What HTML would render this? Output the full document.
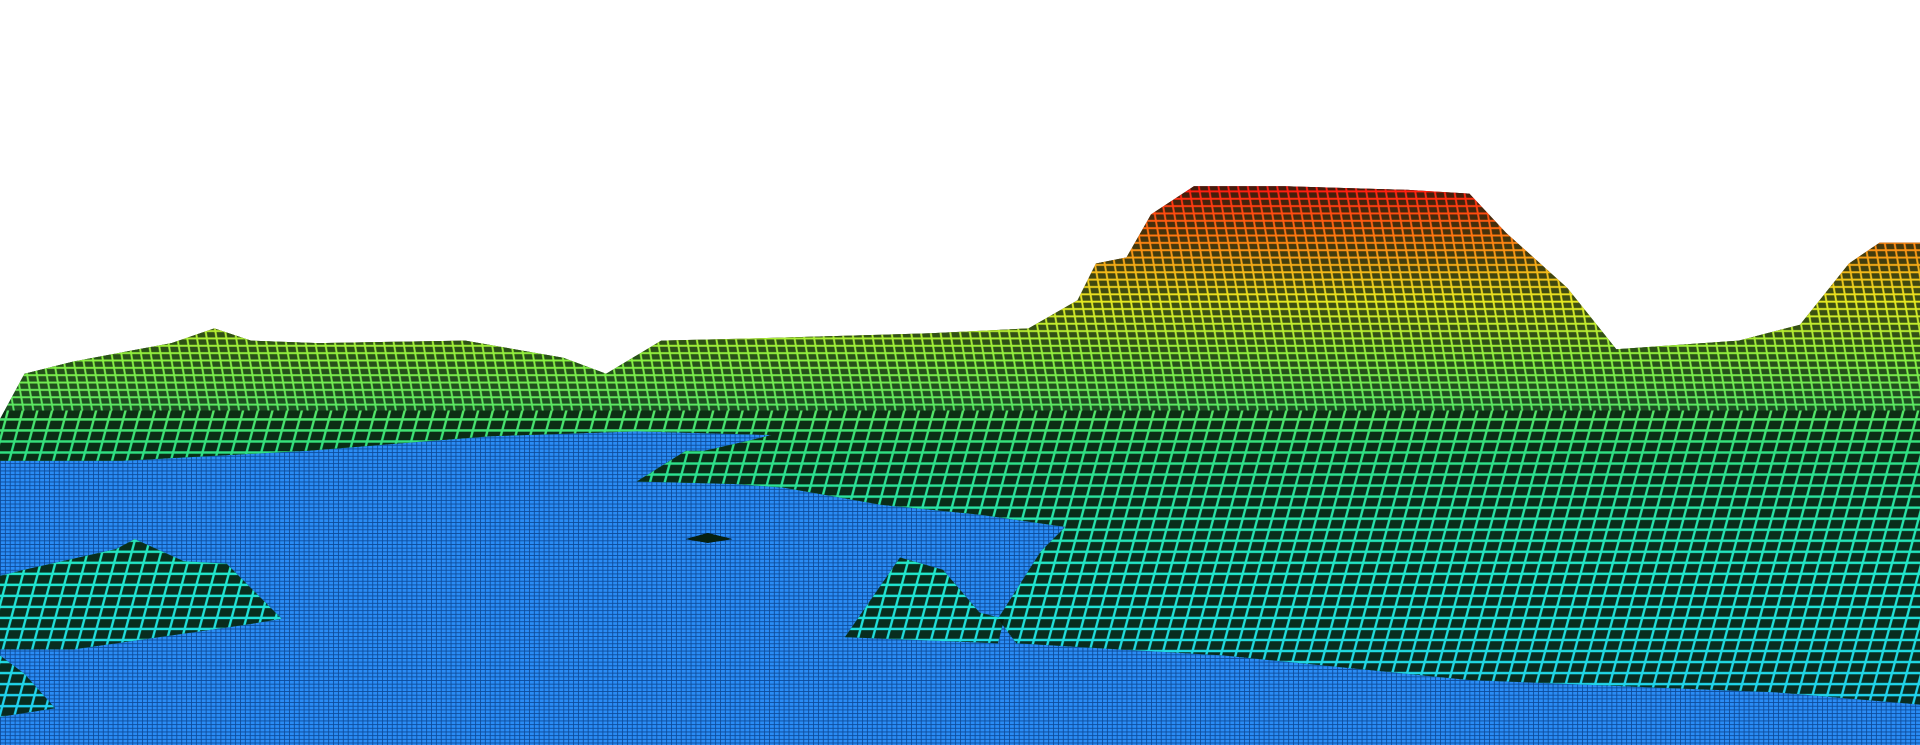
<!DOCTYPE html>
<html><head><meta charset="utf-8"><style>html,body{margin:0;padding:0;background:#fff;overflow:hidden}svg{display:block}</style></head>
<body>
<svg width="1920" height="745" viewBox="0 0 1568 608" preserveAspectRatio="none" xmlns="http://www.w3.org/2000/svg">
<defs>
<linearGradient id="g" x1="0" y1="150" x2="0" y2="580" gradientUnits="userSpaceOnUse">
<stop offset="0" stop-color="#ff1010"/>
<stop offset="0.1" stop-color="#ff7a10"/>
<stop offset="0.22" stop-color="#e8e820"/>
<stop offset="0.33" stop-color="#8cf040"/>
<stop offset="0.5" stop-color="#30e080"/>
<stop offset="0.75" stop-color="#20e8d0"/>
<stop offset="1" stop-color="#20d0f0"/>
</linearGradient>
<pattern id="cells" width="12" height="9" patternUnits="userSpaceOnUse" patternTransform="skewX(-15)">
<rect x="1.3" y="1.3" width="10" height="7" fill="#051a0a" opacity="0.9"/>
</pattern>
<pattern id="cellsFar" width="8" height="6" patternUnits="userSpaceOnUse" patternTransform="skewX(10)">
<rect x="1" y="1" width="6.4" height="4.4" fill="#061c0a" opacity="0.75"/>
</pattern>
<pattern id="sea" width="4" height="3" patternUnits="userSpaceOnUse">
<rect width="4" height="3" fill="#2a8cf5"/>
<rect x="0" y="0" width="4" height="0.7" fill="#0d4a98"/>
<rect x="0" y="0" width="0.7" height="3" fill="#0d4a98"/>
</pattern>
<clipPath id="far"><rect x="0" y="0" width="1568" height="335"/></clipPath>
<clipPath id="near"><rect x="0" y="335" width="1568" height="300"/></clipPath>
</defs>
<rect x="0" y="345" width="1568" height="263" fill="url(#sea)"/>
<g id="terrain">
<path id="main" d="M0,342 L20,305 L60,295 L140,280 L175,268 L205,278 L260,280 L380,278 L460,292 L495,305 L520,290 L540,278 L620,276 L760,272 L840,268 L880,245 L895,215 L920,210 L940,175 L975,152 L1050,152 L1150,155 L1200,158 L1230,190 L1280,235 L1320,285 L1420,278 L1470,265 L1510,215 L1535,198 L1568,198 L1568,575 L1450,565 L1200,555 L1000,535 L830,525 L815,505 L850,450 L870,430 L800,420 L720,412 L640,398 L600,395 L520,393 L560,368 L575,368 L610,360 L630,355 L520,352 L400,356 L250,368 L100,376 L0,376 Z"/>
<path id="h1" d="M690,520 L735,455 L770,465 L800,500 L820,505 L815,525 Z"/>
<path id="h2" d="M0,470 L20,465 L95,448 L110,440 L150,458 L185,460 L230,505 L200,510 L130,520 L60,530 L0,530 Z"/>
<path id="h3" d="M0,535 L20,550 L45,578 L0,585 Z"/>
<path id="h4" d="M560,440 L578,435 L598,440 L578,443 Z"/>
</g>
<use href="#main" fill="url(#g)"/><use href="#h1" fill="url(#g)"/><use href="#h2" fill="url(#g)"/><use href="#h3" fill="url(#g)"/><use href="#h4" fill="#062010"/>
<g clip-path="url(#far)"><use href="#main" fill="url(#cellsFar)"/></g>
<g clip-path="url(#near)"><use href="#main" fill="url(#cells)"/></g>
<use href="#h1" fill="url(#cells)"/><use href="#h2" fill="url(#cells)"/><use href="#h3" fill="url(#cells)"/>
</svg>
</body></html>
